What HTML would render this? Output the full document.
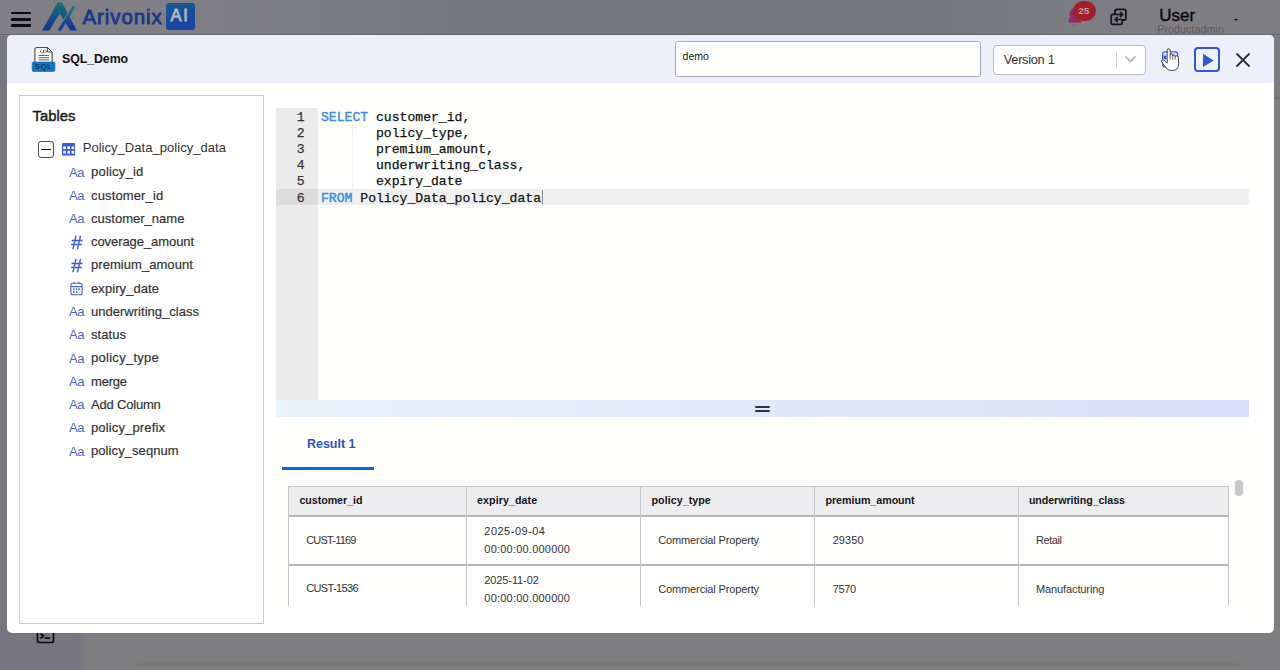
<!DOCTYPE html>
<html lang="en">
<head>
<meta charset="utf-8">
<title>SQL_Demo</title>
<style>
*{box-sizing:border-box;margin:0;padding:0}
html,body{width:1280px;height:670px;overflow:hidden}
body{font-family:"Liberation Sans",sans-serif;background:#7f7f81;position:relative;color:#222}
.abs{position:absolute;white-space:nowrap}
#side{position:absolute;left:0;top:0;width:96px;height:670px;background:linear-gradient(90deg,#777680 0,#777680 79px,#7f7f81 90px)}
#modal{position:absolute;left:7px;top:35px;width:1267px;height:598.2px;background:#fffffd;border-radius:5px;overflow:hidden}
#mhead{position:absolute;left:0;top:0;width:1267px;height:48.3px;background:#edeffb}
.t{position:absolute;white-space:nowrap;line-height:1}
.col{color:#333;font-size:13px;-webkit-text-stroke:0.2px #333}
.mono{font-family:"Liberation Mono","DejaVu Sans Mono",monospace}
.kw{color:#378be6;-webkit-text-stroke:0.4px #378be6}
.ln{color:#333;font-size:13.1px;line-height:16.2px;-webkit-text-stroke:0.25px #333}
.code{color:#111;font-size:13.1px;line-height:16.2px;white-space:pre;-webkit-text-stroke:0.25px}
.th{font-size:10.7px;font-weight:bold;color:#16161a}
.td{font-size:11px;color:#333}
</style>
</head>
<body>
<div id="side"></div>
<!-- top bar -->
<div id="topbar">
  <div class="abs" style="left:0;top:0;width:1280px;height:36px;background:linear-gradient(90deg,#7f7f85 0,#7f7f85 200px,#767880 450px,#767880 950px,#7e7e83 1150px)"></div>
  <div class="abs" style="left:0;top:33.6px;width:1280px;height:1.6px;background:#65666f"></div>
  <!-- hamburger -->
  <div class="abs" style="left:10.5px;top:11.8px;width:20.5px;height:2.6px;background:#0a0a12;border-radius:1px"></div>
  <div class="abs" style="left:10.5px;top:18px;width:20.5px;height:2.6px;background:#0a0a12;border-radius:1px"></div>
  <div class="abs" style="left:10.5px;top:24.2px;width:20.5px;height:2.6px;background:#0a0a12;border-radius:1px"></div>
  <!-- logo mark -->
  <svg class="abs" style="left:40px;top:0" width="42" height="34" viewBox="0 0 42 34">
    <defs>
      <linearGradient id="lg1" x1="0" y1="0" x2="0" y2="1"><stop offset="0" stop-color="#177272"/><stop offset="1" stop-color="#163096"/></linearGradient>
      <linearGradient id="lg2" x1="0" y1="0" x2="0" y2="1"><stop offset="0" stop-color="#1a8272"/><stop offset="1" stop-color="#163096"/></linearGradient>
    </defs>
    <path d="M2.2 30.4 L17.5 2.5 L22 2.5 L36.8 30.4 L30.4 30.4 L19.8 13.4 L9.2 30.4 Z" fill="url(#lg1)"/>
    <path d="M32.5 6.2 L17.5 30.4" stroke="#83838a" stroke-width="1.6"/>
    <path d="M32.5 6.2 L35.7 6.2 L21.2 30.4 L17.5 30.4 Z" fill="url(#lg2)"/>
  </svg>
  <span id="brand" class="t" style="left:82.5px;top:6.5px;font-size:20.5px;color:#1b3784;letter-spacing:0.9px;-webkit-text-stroke:0.8px #1b3784">Arivonix</span>
  <div class="abs" style="left:166.4px;top:2.5px;width:28.4px;height:27px;border-radius:3px;background:linear-gradient(160deg,#1b5a8a,#1a45a0 70%)"></div>
  <span id="brandai" class="t" style="left:170.6px;top:7.8px;font-size:16.6px;color:#b3b7c3;-webkit-text-stroke:0.8px #b3b7c3;letter-spacing:1.6px">AI</span>
  <!-- bell + badge -->
  <svg class="abs" style="left:1066px;top:6.4px" width="20" height="22" viewBox="0 0 20 22">
    <defs><linearGradient id="bg1" x1="0" y1="0" x2="1" y2="0"><stop offset="0" stop-color="#8a2c7a"/><stop offset="1" stop-color="#9a2448"/></linearGradient></defs>
    <path d="M8.5 2 C5 2 3.8 5.5 3.8 9 L3.4 13 L1.8 16.4 L15.4 16.4 L14 13 L14 9 C14 5 12 2 8.5 2 Z" fill="url(#bg1)"/>
    <rect x="6.2" y="18.6" width="4.6" height="1.5" rx="0.7" fill="#b0506a"/>
  </svg>
  <div class="abs" style="left:1072.6px;top:1.4px;width:23.6px;height:19.6px;border-radius:10px;background:#a01f2c"></div>
  <span id="badge" class="t" style="left:1078.6px;top:6px;font-size:9.5px;font-weight:bold;color:#c9a0a6">25</span>
  <!-- swap icon -->
  <svg class="abs" style="left:1108px;top:6px" width="22" height="22" viewBox="0 0 22 22" fill="none" stroke="#15151c" stroke-width="1.8" stroke-linecap="round" stroke-linejoin="round">
    <path d="M7 8.2 V5 Q7 3.4 8.6 3.4 H16.3 Q17.9 3.4 17.9 5 V12.4 Q17.9 14 16.3 14 H14.4"/>
    <path d="M14.2 14.2 V16.8 Q14.2 18.4 12.6 18.4 H4.85 Q3.25 18.4 3.25 16.8 V10 Q3.25 8.4 4.85 8.4 H6.8"/>
    <path d="M8.2 8.5 H14.2 M12.5 6.4 L14.8 8.5 L12.5 10.6" stroke-width="1.6"/>
    <path d="M13.8 13.5 H7.6 M9.3 11.4 L7 13.5 L9.3 15.6" stroke-width="1.6"/>
  </svg>
  <span id="user" class="t" style="left:1159.3px;top:7.2px;font-size:17px;color:#08080c;-webkit-text-stroke:0.35px #08080c">User</span>
  <span id="padmin" class="t" style="left:1157.3px;top:23.6px;font-size:10.8px;color:#5b5b60">Productadmin</span>
  <div class="abs" style="left:1233.6px;top:19.4px;width:0;height:0;border-left:2.3px solid transparent;border-right:2.3px solid transparent;border-top:2.9px solid #111"></div>
  <!-- partially hidden terminal icon -->
  <svg class="abs" style="left:35.6px;top:624.6px" width="20" height="20" viewBox="0 0 20 20" fill="none" stroke="#0c0c12" stroke-width="1.7" stroke-linejoin="round" stroke-linecap="round">
    <rect x="1.5" y="2" width="16" height="15.5" rx="2"/>
    <path d="M5 9 L7.5 11 L5 13 M9.5 13.2 L13.5 13.2"/>
  </svg>
  <!-- faint background lines -->
  <div class="abs" style="left:1270px;top:35px;width:10px;height:63px;background:#7c7d83"></div>
  <div class="abs" style="left:1270px;top:97.4px;width:10px;height:1.6px;background:#717173"></div>
  <div class="abs" style="left:135px;top:661px;width:1105px;height:5px;background:#767678;filter:blur(1.5px)"></div>
</div>
<!-- modal -->
<div id="modal">
  <div id="mhead">
    <!-- SQL file icon -->
    <svg class="abs" style="left:24px;top:11px" width="26" height="27" viewBox="0 0 26 27">
      <path d="M3.9 3 Q3.9 1.6 5.3 1.6 L16.6 1.6 L21.1 6 L21.1 18 L3.9 18 Z" fill="#fbfbfd" stroke="#3a3a42" stroke-width="1"/>
      <path d="M16.6 1.6 L16.6 6 L21.1 6" fill="none" stroke="#3a3a42" stroke-width="0.9"/>
      <path d="M10.4 4.2 L9 5.5 L10.4 6.8 M14.4 4.2 L15.8 5.5 L14.4 6.8 M13 3.8 L11.8 7.2" fill="none" stroke="#2a2a30" stroke-width="0.8"/>
      <path d="M7.6 9.5 H18 M7.6 11.7 H18 M7.6 13.9 H18" stroke="#6b6264" stroke-width="1"/>
      <rect x="1.2" y="16.1" width="22.7" height="9.3" rx="1.5" fill="#1876c0" stroke="#145f9c" stroke-width="0.7"/>
      <text x="12.6" y="23.3" font-family="Liberation Sans, sans-serif" font-size="7.8" font-weight="bold" fill="#0e3866" text-anchor="middle" letter-spacing="0.5">SQL</text>
    </svg>
    <span id="title" class="t" style="left:55.1px;top:18px;font-size:12.4px;font-weight:bold;color:#101014;letter-spacing:-0.11px">SQL_Demo</span>
    <!-- description textarea -->
    <div class="abs" style="left:667.8px;top:6px;width:306px;height:36px;border:1px solid #a9a9af;border-radius:3px;background:#fffffd"></div>
    <span id="demo" class="t" style="left:675.5px;top:15.5px;font-size:10.6px;color:#222">demo</span>
    <!-- version select -->
    <div class="abs" style="left:986px;top:10px;width:153px;height:29.5px;border:1px solid #b9b9bd;border-radius:4px;background:#fff"></div>
    <span id="ver" class="t" style="left:996.8px;top:18.7px;font-size:12.8px;color:#333;letter-spacing:-0.30px">Version 1</span>
    <div class="abs" style="left:1108.5px;top:16.5px;width:1px;height:16px;background:#cfcfd2"></div>
    <svg class="abs" style="left:1117px;top:20px" width="13" height="9" viewBox="0 0 13 9" fill="none" stroke="#bcbcc0" stroke-width="1.8" stroke-linecap="round" stroke-linejoin="round"><path d="M2 2 L6.5 6.5 L11 2"/></svg>
    <!-- save icon under hand cursor -->
    <svg class="abs" style="left:1151px;top:11px" width="26" height="28" viewBox="0 0 26 28">
      <rect x="4.6" y="5.8" width="15" height="15.2" rx="2" fill="#d9e0fa" stroke="#3b5bdb" stroke-width="1.2"/>
      <rect x="5.6" y="9.6" width="2.8" height="3.6" fill="#3b5bdb"/>
      <path d="M9.2 16.8 L9.2 4.2 Q9.2 2.7 10.7 2.7 Q12.2 2.7 12.2 4.2 L12.2 9 Q12.2 7.8 13.45 7.8 Q14.7 7.8 14.7 9 L14.7 10 Q14.7 8.8 15.95 8.8 Q17.2 8.8 17.2 10 L17.2 11 Q17.2 9.8 18.7 9.8 Q20.2 9.8 20.4 11 L20.6 17.4 Q20.6 24.4 15 24.4 L13 24.4 Q10 24.4 7.9 21.5 L3.8 16.2 Q3 15 4 14.2 Q5 13.5 6 14.3 L9.2 17.2 Z" fill="#fff" stroke="#3a3a44" stroke-width="0.9" stroke-linejoin="round"/>
      <path d="M12.2 9 V13.6 M14.7 10 V13.6 M17.2 11 V13.6" stroke="#3a3a44" stroke-width="0.8" fill="none"/>
    </svg>
    <!-- run button -->
    <div class="abs" style="left:1186.8px;top:11.7px;width:25.9px;height:25.7px;border:2px solid #3057d5;border-radius:4px;background:#eef1fd"></div>
    <svg class="abs" style="left:1194.6px;top:17.5px" width="13" height="15" viewBox="0 0 13 15"><path d="M1 0.8 L11.6 7.4 L1 14 Z" fill="#3057d5"/></svg>
    <!-- close -->
    <svg class="abs" style="left:1227.4px;top:15.6px" width="18" height="18" viewBox="0 0 18 18" fill="none" stroke="#2c2c33" stroke-width="1.8" stroke-linecap="round"><path d="M3 3 L15 15 M15 3 L3 15"/></svg>
  </div>
  <!-- tables panel -->
  <div id="tpanel" class="abs" style="left:12px;top:60.4px;width:245px;height:528.2px;border:1px solid #cbcbce;background:#fff"></div>
  <span id="tables" class="t" style="left:25.6px;top:73.5px;font-size:14.8px;color:#1c1c20;-webkit-text-stroke:0.45px #1c1c20;letter-spacing:-0.01px">Tables</span>
  <div class="abs" style="left:31px;top:106.3px;width:16.4px;height:16.4px;border:1.2px solid #4a4a4e;border-radius:3px;background:#fff"></div>
  <div class="abs" style="left:34.3px;top:113.7px;width:9.8px;height:1.6px;background:#1a1a1e"></div>
  <svg class="abs" style="left:54.9px;top:108.2px" width="13.4" height="12.6" viewBox="0 0 13.4 12.6"><rect x="0" y="0" width="13.4" height="12.6" rx="1.2" fill="#3b5bdb"/><g fill="#fff"><rect x="1.3" y="3.4" width="2.5" height="2.7"/><rect x="5.45" y="3.4" width="2.5" height="2.7"/><rect x="9.6" y="3.4" width="2.5" height="2.7"/><rect x="1.3" y="7.9" width="2.5" height="2.7"/><rect x="5.45" y="7.9" width="2.5" height="2.7"/><rect x="9.6" y="7.9" width="2.5" height="2.7"/></g></svg>
  <span id="tname" class="t" style="left:75.7px;top:106.1px;font-size:13px;color:#333;letter-spacing:0.04px">Policy_Data_policy_data</span>
  <span class="t" style="left:62px;top:130.6px;font-size:13.1px;color:#4a68d8;letter-spacing:-0.5px">Aa</span>
  <span id="c0" class="t col" style="left:84.0px;top:130.3px;letter-spacing:0.22px">policy_id</span>
  <span class="t" style="left:62px;top:153.9px;font-size:13.1px;color:#4a68d8;letter-spacing:-0.5px">Aa</span>
  <span id="c1" class="t col" style="left:84.0px;top:153.6px;letter-spacing:0.14px">customer_id</span>
  <span class="t" style="left:62px;top:177.1px;font-size:13.1px;color:#4a68d8;letter-spacing:-0.5px">Aa</span>
  <span id="c2" class="t col" style="left:84.0px;top:176.8px;letter-spacing:0.02px">customer_name</span>
  <span class="t" style="left:63.6px;top:198.7px;font-size:18px;color:#3b5bdb;font-style:italic;-webkit-text-stroke:0.3px #3b5bdb;display:inline-block;transform:scaleX(1.1);transform-origin:left center">#</span>
  <span id="c3" class="t col" style="left:84.0px;top:200.1px;letter-spacing:-0.07px">coverage_amount</span>
  <span class="t" style="left:63.6px;top:221.9px;font-size:18px;color:#3b5bdb;font-style:italic;-webkit-text-stroke:0.3px #3b5bdb;display:inline-block;transform:scaleX(1.1);transform-origin:left center">#</span>
  <span id="c4" class="t col" style="left:84.0px;top:223.3px;letter-spacing:0.05px">premium_amount</span>
  <svg class="abs" style="left:62.5px;top:246.3px" width="14" height="15" viewBox="0 0 14 15" fill="none" stroke="#4561d6" stroke-width="1.1"><rect x="0.9" y="2.2" width="11.2" height="11.6" rx="2"/><path d="M0.9 5.6 H12.1 M3.9 0.8 V3 M9.1 0.8 V3"/><g fill="#4561d6" stroke="none"><rect x="3" y="7.3" width="1.6" height="1.6"/><rect x="5.7" y="7.3" width="1.6" height="1.6"/><rect x="8.4" y="7.3" width="1.6" height="1.6"/><rect x="3" y="10.2" width="1.6" height="1.6"/><rect x="5.7" y="10.2" width="1.6" height="1.6"/></g></svg>
  <span id="c5" class="t col" style="left:84.0px;top:246.6px;letter-spacing:0.08px">expiry_date</span>
  <span class="t" style="left:62px;top:270.1px;font-size:13.1px;color:#4a68d8;letter-spacing:-0.5px">Aa</span>
  <span id="c6" class="t col" style="left:84.0px;top:269.8px;letter-spacing:0.02px">underwriting_class</span>
  <span class="t" style="left:62px;top:293.3px;font-size:13.1px;color:#4a68d8;letter-spacing:-0.5px">Aa</span>
  <span id="c7" class="t col" style="left:84.0px;top:293.1px;letter-spacing:0.05px">status</span>
  <span class="t" style="left:62px;top:316.6px;font-size:13.1px;color:#4a68d8;letter-spacing:-0.5px">Aa</span>
  <span id="c8" class="t col" style="left:84.0px;top:316.3px;letter-spacing:0.28px">policy_type</span>
  <span class="t" style="left:62px;top:339.8px;font-size:13.1px;color:#4a68d8;letter-spacing:-0.5px">Aa</span>
  <span id="c9" class="t col" style="left:84.0px;top:339.6px;letter-spacing:-0.19px">merge</span>
  <span class="t" style="left:62px;top:363.1px;font-size:13.1px;color:#4a68d8;letter-spacing:-0.5px">Aa</span>
  <span id="c10" class="t col" style="left:84.0px;top:362.8px;letter-spacing:-0.19px">Add Column</span>
  <span class="t" style="left:62px;top:386.3px;font-size:13.1px;color:#4a68d8;letter-spacing:-0.5px">Aa</span>
  <span id="c11" class="t col" style="left:84.0px;top:386.1px;letter-spacing:0.14px">policy_prefix</span>
  <span class="t" style="left:62px;top:409.6px;font-size:13.1px;color:#4a68d8;letter-spacing:-0.5px">Aa</span>
  <span id="c12" class="t col" style="left:84.0px;top:409.3px;letter-spacing:0.08px">policy_seqnum</span>
  <!-- editor + results -->
  <div class="abs" style="left:269.2px;top:72.5px;width:41.8px;height:292.5px;background:#ebebeb"></div>
  <div class="abs" style="left:269.2px;top:154.0px;width:41.8px;height:16.2px;background:#dcdcdc"></div>
  <div class="abs" style="left:311.0px;top:154.0px;width:931.0px;height:16.2px;background:#efefef"></div>
  <div class="abs" style="left:345.3px;top:89.2px;width:1.0px;height:64.8px;background:#f0f0f0"></div>
  <span class="t mono ln" style="left:269.2px;top:74.5px;width:28.4px;text-align:right">1</span>
  <span id="l0" class="t mono code" style="left:314.0px;top:74.5px"><span class="kw">SELECT</span> customer_id,</span>
  <span class="t mono ln" style="left:269.2px;top:90.7px;width:28.4px;text-align:right">2</span>
  <span id="l1" class="t mono code" style="left:314.0px;top:90.7px">       policy_type,</span>
  <span class="t mono ln" style="left:269.2px;top:106.9px;width:28.4px;text-align:right">3</span>
  <span id="l2" class="t mono code" style="left:314.0px;top:106.9px">       premium_amount,</span>
  <span class="t mono ln" style="left:269.2px;top:123.1px;width:28.4px;text-align:right">4</span>
  <span id="l3" class="t mono code" style="left:314.0px;top:123.1px">       underwriting_class,</span>
  <span class="t mono ln" style="left:269.2px;top:139.3px;width:28.4px;text-align:right">5</span>
  <span id="l4" class="t mono code" style="left:314.0px;top:139.3px">       expiry_date</span>
  <span class="t mono ln" style="left:269.2px;top:155.5px;width:28.4px;text-align:right">6</span>
  <span id="l5" class="t mono code" style="left:314.0px;top:155.5px"><span class="kw">FROM</span> Policy_Data_policy_data</span>
  <div class="abs" style="left:534.5px;top:155.0px;width:1.2px;height:14.2px;background:#8c8c8c"></div>
  <div class="abs" style="left:269.2px;top:365.0px;width:973.0px;height:16.6px;background:linear-gradient(90deg,#e9f3fc,#e1eaf9 45%,#d8dffa)"></div>
  <div class="abs" style="left:748.4px;top:371.2px;width:14.2px;height:1.6px;background:#2a3150;border-radius:1px"></div>
  <div class="abs" style="left:748.4px;top:375.2px;width:14.2px;height:1.6px;background:#2a3150;border-radius:1px"></div>
  <span id="res" class="t" style="left:300.0px;top:403.2px;font-size:12.5px;font-weight:bold;color:#2c54c8;letter-spacing:-0.02px">Result 1</span>
  <div class="abs" style="left:275.0px;top:431.8px;width:91.7px;height:3.0px;background:#1a63d8"></div>
  <div class="abs" style="left:281.4px;top:451.0px;width:940.8px;height:30.0px;background:#ededef"></div>
  <div class="abs" style="left:281.4px;top:451.0px;width:940.8px;height:1.0px;background:#c6c6c8"></div>
  <div class="abs" style="left:281.4px;top:480.0px;width:940.8px;height:2.0px;background:#b6b6b9"></div>
  <div class="abs" style="left:281.4px;top:529.0px;width:940.8px;height:1.5px;background:#b9b9bc"></div>
  <div class="abs" style="left:280.9px;top:451.0px;width:1.0px;height:119.6px;background:#c6c6c8"></div>
  <div class="abs" style="left:458.7px;top:451.0px;width:1.0px;height:119.6px;background:#c6c6c8"></div>
  <div class="abs" style="left:632.7px;top:451.0px;width:1.0px;height:119.6px;background:#c6c6c8"></div>
  <div class="abs" style="left:807.2px;top:451.0px;width:1.0px;height:119.6px;background:#c6c6c8"></div>
  <div class="abs" style="left:1010.6px;top:451.0px;width:1.0px;height:119.6px;background:#c6c6c8"></div>
  <div class="abs" style="left:1221.2px;top:451.0px;width:1.0px;height:119.6px;background:#c6c6c8"></div>
  <span id="h0" class="t th" style="left:292.4px;top:460.3px;letter-spacing:-0.05px">customer_id</span>
  <span id="h1" class="t th" style="left:470.0px;top:460.3px;letter-spacing:0.07px">expiry_date</span>
  <span id="h2" class="t th" style="left:644.5px;top:460.3px;letter-spacing:0.05px">policy_type</span>
  <span id="h3" class="t th" style="left:818.5px;top:460.3px;letter-spacing:-0.04px">premium_amount</span>
  <span id="h4" class="t th" style="left:1021.9px;top:460.3px;letter-spacing:-0.08px">underwriting_class</span>
  <span id="d00" class="t td" style="left:299.2px;top:499.5px;letter-spacing:-0.81px">CUST-1169</span>
  <span id="d01" class="t td" style="left:477.3px;top:491.3px;letter-spacing:0.49px">2025-09-04</span>
  <span id="d01b" class="t td" style="left:477.3px;top:509.1px;letter-spacing:0.22px">00:00:00.000000</span>
  <span id="d02" class="t td" style="left:651.3px;top:499.9px;letter-spacing:-0.14px">Commercial Property</span>
  <span id="d03" class="t td" style="left:825.7px;top:499.9px;letter-spacing:0.06px">29350</span>
  <span id="d04" class="t td" style="left:1029.0px;top:499.9px;letter-spacing:-0.42px">Retail</span>
  <span id="d10" class="t td" style="left:299.2px;top:548.1px;letter-spacing:-0.63px">CUST-1536</span>
  <span id="d11" class="t td" style="left:477.3px;top:540.1px;letter-spacing:-0.11px">2025-11-02</span>
  <span id="d11b" class="t td" style="left:477.3px;top:557.8px;letter-spacing:0.22px">00:00:00.000000</span>
  <span id="d12" class="t td" style="left:651.3px;top:548.9px;letter-spacing:-0.14px">Commercial Property</span>
  <span id="d13" class="t td" style="left:825.7px;top:548.9px;letter-spacing:-0.37px">7570</span>
  <span id="d14" class="t td" style="left:1029.0px;top:548.9px;letter-spacing:-0.11px">Manufacturing</span>
  <div class="abs" style="left:278.0px;top:570.6px;width:950.0px;height:12.0px;background:#fff"></div>
  <div class="abs" style="left:1228.1px;top:445.0px;width:8.3px;height:16.2px;background:#c6c6ca;border-radius:4px"></div>
</div>
</body>
</html>
